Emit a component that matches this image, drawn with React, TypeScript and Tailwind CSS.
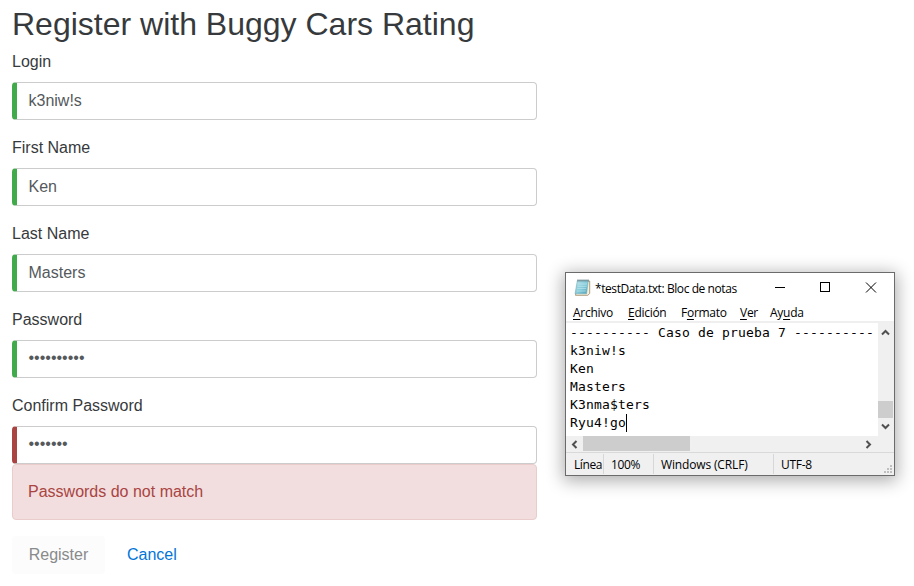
import type { ReactNode } from 'react';

const inputBase = 'flex h-[38px] items-center rounded border border-l-[5px] border-[#ccc] pl-[11.5px] text-[#55595c]';

function Field({ label, value, invalid }: { label: string; value: string; invalid?: boolean }) {
  return (
    <div>
      <div className="mb-2 h-6 leading-6">{label}</div>
      <div className={`${inputBase} ${invalid ? 'border-l-[#a94442]' : 'border-l-[#41ab4b]'}`}>
        <span className={value.startsWith('•') ? 'relative top-[-1.5px]' : 'relative top-[-0.5px]'}>{value}</span>
      </div>
    </div>
  );
}

function MenuItem({ width, children }: { width: string; children: ReactNode }) {
  return <span className={`shrink-0 ${width}`}>{children}</span>;
}

function Key({ children }: { children: string }) {
  return <span className="underline decoration-1 underline-offset-2">{children}</span>;
}

function Chevron({ points }: { points: string }) {
  return (
    <svg width="9" height="9" viewBox="0 0 9 9" fill="none" stroke="#505050" strokeWidth="2">
      <polyline points={points} />
    </svg>
  );
}

function NotepadIcon() {
  return (
    <svg className="mb-0.5" width="17" height="17" viewBox="0 0 17 17">
      <defs>
        <linearGradient id="page" x1="0" y1="0" x2="1" y2="1">
          <stop offset="0" stopColor="#b9e3ea" />
          <stop offset="0.55" stopColor="#83c9d8" />
          <stop offset="1" stopColor="#4a9fb7" />
        </linearGradient>
      </defs>
      <path d="M4 2 H15.7 V14.5 L13.8 16.3 H1.5 Z" fill="#f5f1df" stroke="#9b8762" strokeWidth="0.8" />
      <path d="M3.3 1.5 H14.4 L12.6 14.8 H1 Z" fill="url(#page)" stroke="#75adba" strokeWidth="0.5" />
      <path d="M4 5 H13 M3.7 7.3 H12.6 M3.3 9.6 H12.2 M3 12 H11.8" stroke="#c9edf3" strokeWidth="0.6" />
      <path d="M4 0.4 V2.6 M6 0.4 V2.6 M8 0.4 V2.6 M10 0.4 V2.6 M12 0.4 V2.6 M14 0.4 V2.6" stroke="#53717a" strokeWidth="0.9" />
    </svg>
  );
}

const lines = ['---------- Caso de prueba 7 ----------', 'k3niw!s', 'Ken', 'Masters', 'K3nma$ters', 'Ryu4!go'];

function Notepad() {
  return (
    <div className="absolute left-[565px] top-[272px] flex h-[204px] w-[330px] flex-col border border-[#6b6b6b] bg-white font-['Open_Sans','Noto_Sans',sans-serif] text-[12px] tracking-[-0.28px] text-black shadow-[0_3px_16px_2px_rgba(0,0,0,0.32)]">
      <div className="flex h-[31px] shrink-0 items-center pl-2">
        <NotepadIcon />
        <span className="ml-1 w-[175px] whitespace-nowrap tracking-[-0.42px]">*testData.txt: Bloc de notas</span>
        <svg className="mb-0.5" width="108" height="11" viewBox="0 0 108 11" fill="none" stroke="#000">
          <path d="M5 5.5 H15" />
          <rect x="50.5" y="0.5" width="9" height="9" />
          <path d="M96 0.5 L106 10.5 M106 0.5 L96 10.5" />
        </svg>
      </div>
      <div className="flex h-[17px] shrink-0 items-center pl-[7px] leading-[17px]">
        <MenuItem width="w-[55px]"><Key>A</Key>rchivo</MenuItem>
        <MenuItem width="w-[53px]"><Key>E</Key>dición</MenuItem>
        <MenuItem width="w-[59px]">F<Key>o</Key>rmato</MenuItem>
        <MenuItem width="w-[30px]"><Key>V</Key>er</MenuItem>
        <MenuItem width="w-[40px]">Ay<Key>u</Key>da</MenuItem>
      </div>
      <div className="flex h-[115px] shrink-0 border-t-2 border-[#efefef]">
        <div className="w-[312px] shrink-0 whitespace-pre pl-1 pt-px font-['DejaVu_Sans_Mono',monospace] text-[13px] leading-[18px] tracking-[0.173px]">
          {lines.map((line, i) => (
            <div key={line} className="flex h-[18px] items-center">
              {line}
              {i === lines.length - 1 && <span className="h-[18px] w-px shrink-0 bg-black" />}
            </div>
          ))}
        </div>
        <div className="flex flex-1 flex-col bg-[#f0f0f0] pl-[3px] pt-[5px]">
          <Chevron points="1,6.5 4.5,3 8,6.5" />
          <div className="-ml-[3px] mt-16 h-[17px] w-[15px] shrink-0 bg-[#cdcdcd]" />
          <div className="mt-1"><Chevron points="1,2.5 4.5,6 8,2.5" /></div>
        </div>
      </div>
      <div className="flex h-4 shrink-0 items-center bg-[#f0f0f0] pl-1">
        <Chevron points="6.5,1 3,4.5 6.5,8" />
        <div className="ml-1 mr-[174px] h-[15px] w-[107px] shrink-0 self-start bg-[#cdcdcd]" />
        <Chevron points="2.5,1 6,4.5 2.5,8" />
      </div>
      <div className="flex h-[23px] shrink-0 items-center whitespace-nowrap border-t border-[#d9d9d9] bg-[#f0f0f0]">
        <span className="h-5 w-[38px] shrink-0 border-r border-[#d7d7d7] pl-2 leading-[22px] tracking-[-0.4px]">Línea</span>
        <span className="h-5 w-[50px] shrink-0 border-r border-[#d7d7d7] pl-[7px] leading-[22px] tracking-[-0.38px]">100%</span>
        <span className="h-5 w-[120px] shrink-0 border-r border-[#d7d7d7] pl-[7px] leading-[22px] tracking-[-0.15px]">Windows (CRLF)</span>
        <span className="h-5 flex-1 pl-[7px] leading-[22px]">UTF-8</span>
        <svg className="mr-0.5 self-end" width="8" height="10" viewBox="0 0 8 10" fill="#bfbfbf">
          <path d="M6 0h2v2H6zM3 3h2v2H3zM6 3h2v2H6zM0 6h2v2H0zM3 6h2v2H3zM6 6h2v2H6z" />
        </svg>
      </div>
    </div>
  );
}

export default function App() {
  return (
    <div className="relative h-[586px] w-[914px] overflow-hidden bg-white font-['Liberation_Sans',Arial,sans-serif] text-base text-[#373a3c]">
      <Notepad />
      <main className="ml-3 w-[525px] pt-[7px]">
        <h2 className="mb-2 text-[32px] leading-[35px]">Register with Buggy Cars Rating</h2>
        <div className="flex flex-col gap-4">
          <Field label="Login" value="k3niw!s" />
          <Field label="First Name" value="Ken" />
          <Field label="Last Name" value="Masters" />
          <Field label="Password" value="••••••••••" />
          <Field label="Confirm Password" value="•••••••" invalid />
        </div>
        <div className="h-14 rounded border border-[#ebcccc] bg-[#f2dede] px-[15px] pt-[15px] leading-6 text-[#a94442]">
          Passwords do not match
        </div>
        <div className="mt-4 flex h-[38px] items-center">
          <span className="flex h-full w-[93px] items-center justify-center rounded bg-[#fcfcfc] text-[#888a8b]">Register</span>
          <span className="ml-[22px] text-[#0275d8]">Cancel</span>
        </div>
      </main>
    </div>
  );
}
